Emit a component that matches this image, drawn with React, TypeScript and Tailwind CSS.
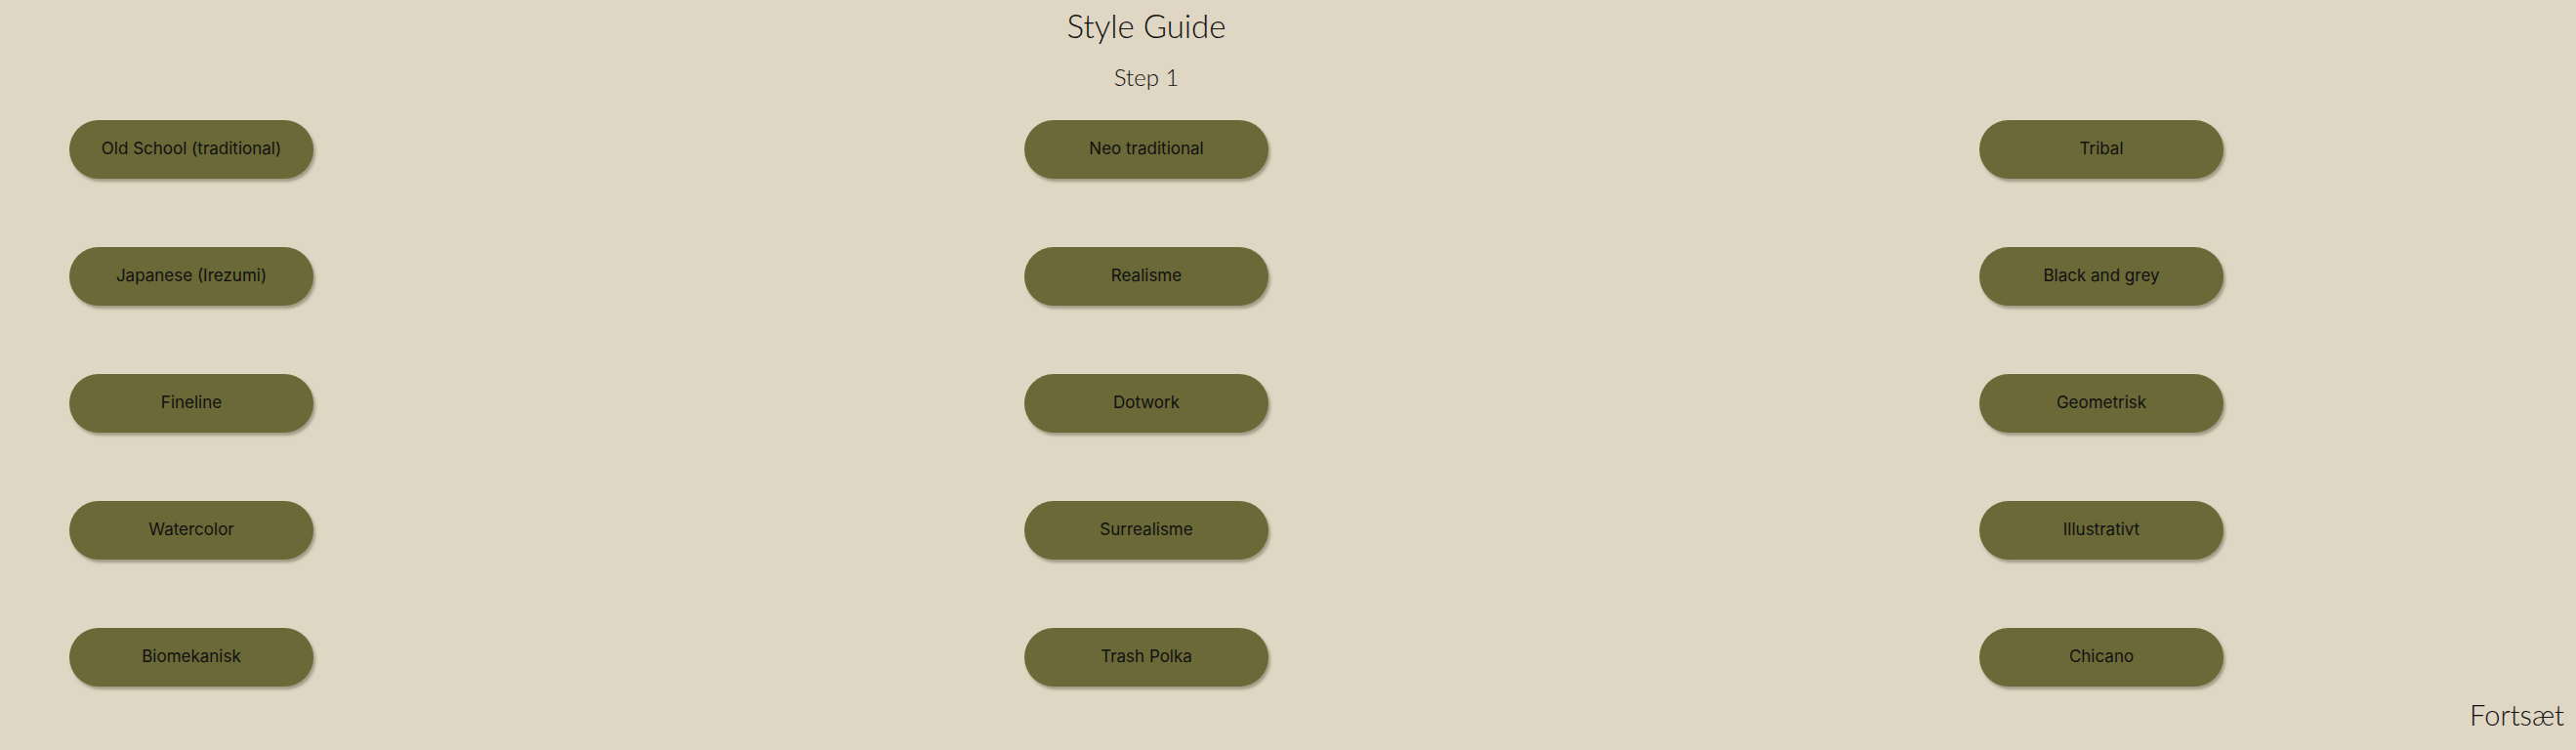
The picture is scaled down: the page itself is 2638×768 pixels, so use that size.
import React from "react";

const rows = [
  ["Old School (traditional)", "Neo traditional", "Tribal"],
  ["Japanese (Irezumi)", "Realisme", "Black and grey"],
  ["Fineline", "Dotwork", "Geometrisk"],
  ["Watercolor", "Surrealisme", "Illustrativt"],
  ["Biomekanisk", "Trash Polka", "Chicano"],
];

export default function App() {
  return (
    <div className="relative w-full h-[768px] bg-[#dfd7c3] overflow-hidden">
      <div className="w-[2348px] flex flex-col items-center">
        <h1 className="pt-[10px] text-[33px] leading-none font-light text-[#111] [font-family:Lato,'Noto_Sans',sans-serif]">
          Style Guide
        </h1>
        <h2 className="mt-[24px] text-[24px] leading-none font-light text-[#111] [font-family:Lato,'Noto_Sans',sans-serif]">
          Step 1
        </h2>
        <div className="mt-[32px] w-full px-[71px] grid grid-cols-[250px_250px_250px] justify-between gap-y-[70px]">
          {rows.flat().map((label) => (
            <button
              key={label}
              className="h-[60px] w-[250px] rounded-full bg-[#6a6937] shadow-[2px_3px_3px_rgba(90,80,60,0.45)] text-[17px] text-[#111] [font-family:Inter,'Noto_Sans',sans-serif] flex items-center justify-center"
            >
              {label}
            </button>
          ))}
        </div>
      </div>
      <div className="absolute right-[12px] bottom-[22px] text-[29px] leading-none font-light text-[#111] [font-family:Lato,'Noto_Sans',sans-serif]">
        Fortsæt
      </div>
    </div>
  );
}
